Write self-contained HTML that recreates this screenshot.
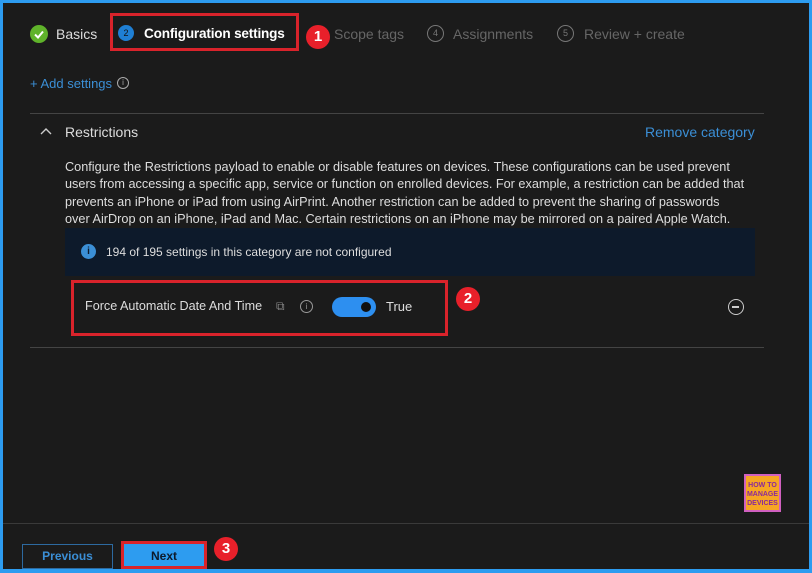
<!DOCTYPE html>
<html><head><style>
*{margin:0;padding:0;box-sizing:border-box}
body{width:812px;height:573px;background:#1b1b1b;font-family:"Liberation Sans",sans-serif;overflow:hidden;position:relative;color:#e0e0e0}
.frame{position:absolute;inset:0;border:3px solid #2d9cf0;border-bottom-width:4px}
.a{position:absolute;white-space:nowrap}
.badge{position:absolute;width:24px;height:24px;border-radius:50%;background:#e8202a;color:#fff;font-weight:bold;font-size:15px;text-align:center;line-height:24px}
.circ{position:absolute;width:17px;height:17px;border-radius:50%;border:1px solid #777;color:#777;font-size:9px;text-align:center;line-height:15px}
.red{position:absolute;border:3px solid #d9232b}
</style></head><body>
<div class="frame"></div>
<div class="a" style="left:30px;top:25px;width:18px;height:18px;border-radius:50%;background:#5fb32a"><svg width="18" height="18"><path d="M5 9.5l3 3 5-6" stroke="#fff" stroke-width="2" fill="none"/></svg></div>
<div class="a" style="left:56px;top:26px;font-size:14px;color:#ddd">Basics</div>
<div class="red" style="left:110px;top:13px;width:189px;height:38px"></div>
<div class="a" style="left:118px;top:25px;width:16px;height:16px;border-radius:50%;background:#1f7fd4;color:#111;font-size:9px;text-align:center;line-height:16px">2</div>
<div class="a" style="left:144px;top:26px;font-size:13.6px;font-weight:bold;color:#fff;letter-spacing:-0.2px">Configuration settings</div>
<div class="badge" style="left:306px;top:25px">1</div>
<div class="a" style="left:334px;top:26px;font-size:14px;color:#666">Scope tags</div>
<div class="circ" style="left:427px;top:25px">4</div>
<div class="a" style="left:453px;top:26px;font-size:14px;color:#666">Assignments</div>
<div class="circ" style="left:557px;top:25px">5</div>
<div class="a" style="left:584px;top:26px;font-size:14px;color:#666">Review + create</div>
<div class="a" style="left:30px;top:76px;font-size:13px;color:#3b8fd6">+ Add settings</div>
<div class="circ" style="left:117px;top:77px;width:12px;height:12px;line-height:10px;font-size:8px;color:#aaa;border-color:#aaa">i</div>
<div class="a" style="left:30px;top:113px;width:734px;height:1px;background:#444"></div>
<svg class="a" style="left:40px;top:126px" width="12" height="10"><path d="M1 8l5-5 5 5" stroke="#ccc" stroke-width="1.4" fill="none"/></svg>
<div class="a" style="left:65px;top:124px;font-size:14px;color:#ddd">Restrictions</div>
<div class="a" style="left:645px;top:124px;font-size:14px;color:#3b8fd6">Remove category</div>
<div class="a" style="left:65px;top:159px;font-size:12.7px;line-height:17.4px;color:#ddd">Configure the Restrictions payload to enable or disable features on devices. These configurations can be used prevent<br>users from accessing a specific app, service or function on enrolled devices. For example, a restriction can be added that<br>prevents an iPhone or iPad from using AirPrint. Another restriction can be added to prevent the sharing of passwords<br>over AirDrop on an iPhone, iPad and Mac. Certain restrictions on an iPhone may be mirrored on a paired Apple Watch.</div>
<div class="a" style="left:65px;top:228px;width:690px;height:48px;background:#0d1a2b"></div>
<div class="a" style="left:81px;top:244px;width:15px;height:15px;border-radius:50%;background:#3b8fd6;color:#0d1a2b;font-size:10px;font-weight:bold;text-align:center;line-height:15px">i</div>
<div class="a" style="left:106px;top:245px;font-size:12px;color:#ddd">194 of 195 settings in this category are not configured</div>
<div class="red" style="left:71px;top:280px;width:377px;height:56px"></div>
<div class="a" style="left:85px;top:299px;font-size:12.6px;color:#ddd">Force Automatic Date And Time</div>
<div class="a" style="left:276px;top:299px;font-size:12px;color:#888">⧉</div>
<div class="circ" style="left:300px;top:300px;width:13px;height:13px;line-height:11px;font-size:8px;color:#999;border-color:#999">i</div>
<div class="a" style="left:332px;top:297px;width:44px;height:20px;border-radius:10px;background:#2d8ff0"><div style="position:absolute;right:5px;top:5px;width:10px;height:10px;border-radius:50%;background:#111"></div></div>
<div class="a" style="left:386px;top:299px;font-size:13px;color:#ddd">True</div>
<div class="badge" style="left:456px;top:287px">2</div>
<div class="a" style="left:728px;top:299px;width:16px;height:16px;border-radius:50%;border:1.5px solid #ccc"><div style="position:absolute;left:3px;top:6px;width:7px;height:1.5px;background:#ccc"></div></div>
<div class="a" style="left:30px;top:347px;width:734px;height:1px;background:#444"></div>
<div class="a" style="left:744px;top:474px;width:37px;height:38px;background:#f6a623;border:2px solid #d060c0;font-size:7px;color:#8a2a9a;text-align:center;line-height:9px;font-weight:bold;padding-top:5px">HOW TO<br>MANAGE<br>DEVICES</div>
<div class="a" style="left:3px;top:523px;width:806px;height:1px;background:#3a3a3a"></div>
<div class="a" style="left:22px;top:544px;width:91px;height:25px;border:1px solid #2d6aa0;color:#3b8fd6;font-size:12px;text-align:center;line-height:23px;font-weight:bold">Previous</div>
<div class="red" style="left:121px;top:541px;width:86px;height:28px;background:#2d9cf0;color:#0d1a2b;font-size:12px;text-align:center;line-height:24px;font-weight:bold">Next</div>
<div class="badge" style="left:214px;top:537px">3</div>
</body></html>
